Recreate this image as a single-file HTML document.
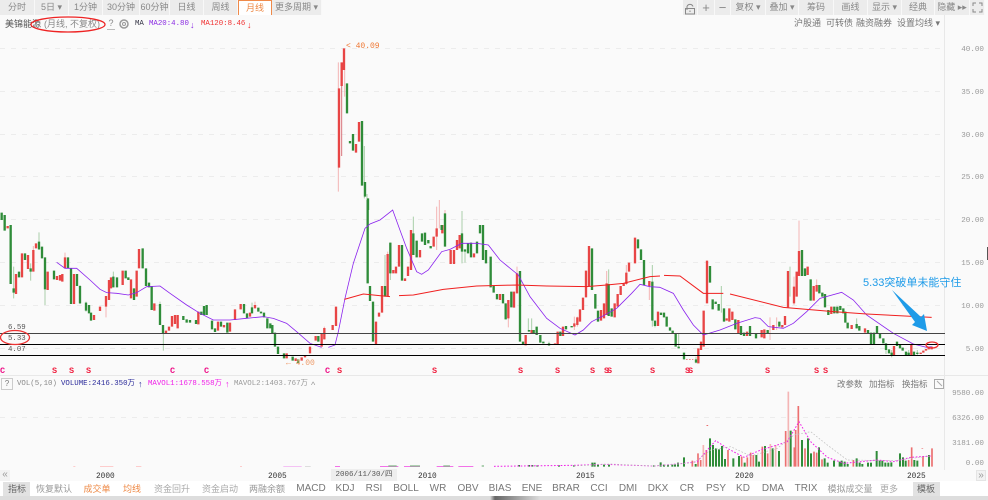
<!DOCTYPE html>
<html><head><meta charset="utf-8"><style>
html,body{margin:0;padding:0;width:988px;height:500px;overflow:hidden;background:#fafafa}
body{position:relative;font-family:"Liberation Sans","Noto Sans CJK SC",sans-serif;font-size:9px;color:#777;filter:blur(.3px)}
.a{position:absolute;white-space:nowrap;line-height:12px}
.t{position:absolute;top:0;height:15px;line-height:15px;background:#ececec;text-align:center;color:#888;font-size:9px;box-sizing:border-box;border-right:1px solid #f8f8f8}
.m{font-family:"Liberation Mono",monospace;font-size:7.4px}
.y{position:absolute;right:4px;font-family:"Liberation Mono",monospace;font-size:7.6px;color:#999;line-height:10px}
.b{position:absolute;top:483px;height:12px;line-height:12px;transform:translateX(-50%);white-space:nowrap;font-size:9px;color:#888}
.e{font-size:10px;color:#777}
</style></head><body>
<div class="t" style="left:0;width:35px">分时</div>
<div class="t" style="left:35px;width:34px">5日 ▾</div>
<div class="t" style="left:69px;width:34px">1分钟</div>
<div class="t" style="left:103px;width:37px">30分钟</div>
<div class="t" style="left:140px;width:30px">60分钟</div>
<div class="t" style="left:170px;width:34px">日线</div>
<div class="t" style="left:204px;width:34px">周线</div>
<div class="t" style="left:238px;width:34px;background:#fff;border:1px solid #ef8a4a;border-bottom:0;color:#ee8844;line-height:14px">月线</div>
<div class="t" style="left:272px;width:50px">更多周期 ▾</div>

<div class="t" style="left:683px;width:15px"></div>
<div class="t" style="left:698px;width:17px;font-size:13px">+</div>
<div class="t" style="left:715px;width:16px;font-size:13px">−</div>
<div class="t" style="left:731px;width:35px">复权 ▾</div>
<div class="t" style="left:766px;width:33px">叠加 ▾</div>
<div class="t" style="left:799px;width:35px">筹码</div>
<div class="t" style="left:834px;width:34px">画线</div>
<div class="t" style="left:868px;width:34px">显示 ▾</div>
<div class="t" style="left:902px;width:33px">经典</div>
<div class="t" style="left:935px;width:35px">隐藏 ▸▸</div>
<div class="t" style="left:970px;width:15px"></div>

<span class="a" style="left:5px;top:18px;color:#555">美锦能源</span>
<span class="a" style="left:44px;top:18px;color:#888">(月线, 不复权)</span>
<span class="a" style="left:107px;top:18px;color:#888;border-bottom:1px solid #bbb;width:8px;text-align:center;line-height:11px">?</span>
<span class="a m" style="left:135px;top:18px;color:#334">MA</span>
<span class="a m" style="left:149px;top:18px;color:#8a2be2">MA20:4.80</span>
<span class="a" style="left:190px;top:19px;color:#8a2be2">↓</span>
<span class="a m" style="left:201px;top:18px;color:#f03030">MA120:8.46</span>
<span class="a" style="left:247px;top:19px;color:#f03030">↓</span>
<span class="a" style="left:794px;top:17px;color:#777">沪股通</span>
<span class="a" style="left:826px;top:17px;color:#777">可转债</span>
<span class="a" style="left:856px;top:17px;color:#777">融资融券</span>
<span class="a" style="left:897px;top:17px;color:#777">设置均线 ▾</span>

<span class="y" style="top:45px">40.00</span>
<span class="y" style="top:88px">35.00</span>
<span class="y" style="top:131px">30.00</span>
<span class="y" style="top:173px">25.00</span>
<span class="y" style="top:216px">20.00</span>
<span class="y" style="top:259px">15.00</span>
<span class="y" style="top:302px">10.00</span>
<span class="y" style="top:345px">5.00</span>
<span class="y" style="top:389px">9580.00</span>
<span class="y" style="top:414px">6326.00</span>
<span class="y" style="top:439px">3181.00</span>
<span class="y" style="top:459px">0.00</span>

<svg width="988" height="500" style="position:absolute;left:0;top:0">
<path d="M944.500 15V470M0 375.500H944M944 375.500H988" stroke="#e8e8e8" fill="none"/>
<path d="M0 48.500H944M0 91.500H944M0 134.500H944M0 176.500H944M0 219.500H944M0 262.500H944M0 305.500H944M0 348.500H944M0 417.500H944" stroke="#ececec" stroke-dasharray="5 6" fill="none"/>
<path d="M687 10V6.500a3.200 3.200 0 0 1 6 0M685.500 8.500h9v5.500h-9z M690 10.500v1.500" stroke="#888" fill="none"/>
<circle cx="124" cy="24" r="4" fill="none" stroke="#999" stroke-width="1.500"/><circle cx="124" cy="24" r="1.500" fill="none" stroke="#999"/>
<path d="M973 6V3h3M982 6V3h-3M973 9v3h3M982 9v3h-3" stroke="#888" fill="none"/>

<!-- candles group 1 -->
<g transform="translate(0,200) scale(.33333)" fill="none">
<path stroke="#a9cfa9" stroke-width="3" d="M41 200V295M92 190V242M117 97V150M135 268V315M240 255V312M258 305V335M490 375V452M480 305V375M340 215V262M612 318V345M756 308V340"/>
<path stroke="#f4b5b5" stroke-width="3" d="M100 138V212M195 158V175M318 320V352M765 305V320M973 380V418"/>
<path stroke="#e84545" stroke-width="7" d="M23 78V85M48 222V282M66 160V232M84 165V207M100 150V215M108 130V145M143 215V270M171 228V240M180 225V242M187 222V245M195 172V205M222 222V312M282 345V360M300 320V333M318 288V320M327 240V300M333 232V265M368 212V255M393 238V295M410 212V290M417 147V205M463 310V332M498 392V400M507 380V392M516 348V380M525 345V372M533 345V385M595 335V373M654 365V392M672 375V382M690 368V395M705 328V360M722 312V328M750 338V350M765 315V325M860 460V475M887 475V483M905 472V482M915 465V472M930 440V460M947 408V422M965 400V440M973 384V418"/>
<path stroke="#2f8c39" stroke-width="7" d="M5 38V60M14 45V92M32 75V252M41 265V278M57 215V232M75 160V180M92 205V215M117 125V148M126 140V175M135 172V268M162 212V238M204 172V205M213 205V312M231 222V258M240 258V310M258 308V332M267 315V340M273 338V362M340 230V262M351 232V262M377 212V235M385 232V240M402 265V300M428 145V205M438 205V258M447 248V262M455 258V330M480 312V375M489 375V400M550 348V360M560 358V368M570 360V368M588 360V372M604 335V345M612 318V345M620 315V345M636 362V388M645 385V396M663 365V380M682 368V398M732 312V340M741 340V355M756 322V340M775 323V335M783 335V340M792 338V352M802 355V385M811 370V385M817 375V400M825 398V440M834 440V462M852 460V475M878 470V482M895 478V490M955 408V425"/>
</g>
<!-- spike -->
<g transform="translate(320,30) scale(.33333)" fill="none">
<path stroke="#f4b5b5" stroke-width="3" d="M55 97V485M74 120V200"/>
<path stroke="#d8767e" stroke-width="3" d="M65 168V378"/>
<path stroke="#a9cfa9" stroke-width="3" d="M133 348V505M141 492V540"/>
<path stroke="#e84545" stroke-width="7" d="M57 175V413M65 97V168M72 55V120M108 342V368M117 276V335"/>
<path stroke="#2f8c39" stroke-width="7" d="M81 160V250M90 333V340M99 312V362M126 273V467M135 456V500M144 505V540"/>
</g>
<!-- group 2 -->
<g transform="translate(330,200) scale(.33333)" fill="none">
<path stroke="#a9cfa9" stroke-width="3" d="M165 165V290M181 128V240M250 50V165M396 33V190M405 155V188M527 310V358M595 355V395M605 355V395M657 425V438M836 208V348M967 195V380M975 362V382"/>
<path stroke="#f4b5b5" stroke-width="3" d="M138 365V433M173 155V290M320 20V150M328 0V85M345 30V100M535 300V382M561 200V280M733 350V390M742 350V380M830 213V345M889 195V255M958 243V300"/>
<path stroke="#e84545" stroke-width="7" d="M8 375V390M18 320V378M138 365V433M147 338V350M156 258V338M173 162V290M190 210V220M198 200V220M207 135V200M225 235V243M234 200V228M243 90V210M270 150V172M311 110V140M320 85V110M337 75V100M362 150V192M372 150V192M381 120V150M389 105V145M432 160V172M510 282V300M535 300V355M552 275V323M561 220V280M587 405V436M605 390V400M675 430V435M683 395V433M699 380V408M733 370V380M742 352V375M750 328V365M759 293V330M768 212V292M777 138V258M813 330V362M822 310V355M830 250V345M854 310V352M863 282V320M872 258V285M881 250V258M889 218V252M897 188V215M915 113V190M958 243V258M984 335V378"/>
<path stroke="#2f8c39" stroke-width="7" d="M113 0V250M120 258V303M129 305V425M165 258V290M181 128V220M216 135V242M250 100V165M260 122V172M276 100V125M285 98V135M295 120V130M302 138V145M335 75V90M345 40V140M396 100V155M405 148V155M414 130V160M423 128V172M441 125V160M450 75V100M459 75V180M468 150V190M482 170V262M491 258V278M501 282V298M519 282V310M527 310V358M544 275V322M570 213V425M579 425V435M597 390V395M611 390V400M620 380V405M631 405V428M640 425V430M657 430V436M691 395V408M708 378V388M725 378V382M786 145V270M796 282V326M804 332V365M836 252V348M845 325V350M924 118V145M933 148V180M942 180V255M967 245V362M975 362V378"/>
</g>
<!-- group 3 -->
<g transform="translate(660,200) scale(.33333)" fill="none">
<path stroke="#a9cfa9" stroke-width="3" d="M56 402V445M108 470V490M184 258V338M243 378V405M390 200V290M452 238V302M556 335V368M590 355V385M678 430V462M695 450V472M746 450V468M772 450V465"/>
<path stroke="#f4b5b5" stroke-width="3" d="M417 62V228M402 230V315M470 238V275M350 352V390M330 352V420M754 430V465"/>
<path stroke="#e84545" stroke-width="7" d="M115 445V490M123 425V450M131 332V440M141 182V310M200 355V362M208 325V365M217 335V360M235 360V400M261 395V408M305 390V412M313 388V415M340 375V390M367 375V382M375 348V375M384 213V322M402 260V310M410 215V290M417 153V228M443 200V225M461 258V302M470 255V275M514 320V342M575 375V387M615 385V398M702 438V465M754 435V465M782 458V462M790 452V458M798 447V452M806 442V448M815 440V448"/>
<path stroke="#2f8c39" stroke-width="7" d="M3 338V345M12 338V352M20 350V380M30 382V392M38 392V402M47 402V440M56 440V445M72 458V478M108 478V488M150 198V248M158 298V328M167 305V312M176 312V332M192 325V365M226 358V388M243 378V405M252 398V408M270 378V408M288 400V415M323 390V400M358 365V380M426 150V228M435 205V228M452 238V302M478 255V280M487 278V290M495 282V322M505 330V345M523 320V340M532 320V340M541 318V330M550 325V340M556 335V368M563 368V385M590 372V385M598 378V392M624 390V400M633 398V432M642 398V432M651 378V400M660 400V415M670 415V430M678 430V450M687 448V460M695 458V468M711 425V438M720 435V445M728 443V452M738 455V465M746 458V465M762 455V468M772 458V462"/>
<path stroke="#e84545" stroke-width="2" stroke-dasharray="5 4" d="M78 478H100"/>
</g>
<!-- MA lines -->
<g fill="none" stroke="#8a22ee">
<path transform="translate(0,200) scale(.33333)" stroke-width="2.400" d="M170 187L195 205L230 205L270 240L300 268L320 278L350 280L385 285L410 278L440 260L480 258L510 280L560 315L600 340L640 360L690 360L740 355L790 350L820 355L860 370L890 395L930 430L965 442"/>
<path transform="translate(330,200) scale(.33333)" stroke-width="2.400" d="M-5 442L15 435L25 395L45 295L70 190L105 85L120 72L150 60L188 30L208 85L230 145L260 215L275 223L295 210L335 155L360 148L395 130L440 130L475 135L510 180L565 225L600 290L650 355L690 385L735 405L760 390L785 365L815 350L860 325L905 280L930 253L960 260L990 262"/>
<path transform="translate(660,200) scale(.33333)" stroke-width="2.400" d="M0 262L40 280L70 330L100 375L130 405L180 390L230 370L285 353L300 355L325 380L370 385L400 370L440 335L480 295L545 277L580 300L620 345L700 400L760 432L800 442L815 440"/>
</g>
<g fill="none" stroke="#f02020" stroke-width="3">
<path transform="translate(330,200) scale(.33333)" d="M43 298L100 282L130 285L180 290M207 287L250 285L340 268L440 258L560 255L650 258L770 260L830 255L880 250L960 230L990 228"/>
<path transform="translate(660,200) scale(.33333)" d="M12 226L60 228L130 280L190 280M210 282L370 322L520 335L620 342L815 352"/>
</g>
<!-- level lines -->
<path d="M0 333.500H945" stroke="#444" stroke-width="1"/>
<path d="M0 344.500H945M0 355.500H945" stroke="#000" stroke-width="1"/>
<ellipse cx="15" cy="337.500" rx="14.500" ry="7" fill="none" stroke="#e33" stroke-width="1.300"/>
<ellipse cx="68" cy="24.500" rx="37" ry="7.500" fill="none" stroke="#e22" stroke-width="1.300"/>
<ellipse cx="932" cy="345" rx="6" ry="3" fill="none" stroke="#e33" stroke-width="1.300"/>
<path d="M892 290L921 317L924 314L927 331L912 325L915 322Z" fill="#1e9be8"/>

<!-- volume -->
<g transform="translate(494,370) scale(.33333)" fill="none">
<path stroke="#f4b5b5" stroke-width="5" d="M628 225V290M829 222V290M845 225V290M883 65V290"/>
<path stroke="#ec7070" stroke-width="5" d="M595 272V290M612 250V290M620 270V290M637 240V290M702 240V290M743 260V290M760 262V290M770 248V290M778 255V290M805 230V290M821 250V290M875 183V290M901 232V290M905 180V290M913 108V290M933 235V290M960 245V290M968 248V290M984 268V290M1078 270V290M1244 270V290M1253 232V290M1287 258V290M1314 235V290M640 165V168M1285 235V237"/>
<path stroke="#2f8c39" stroke-width="6" d="M75 285V290M105 285V290M115 285V290M130 286V290M195 286V290M240 286V290M295 278V290M302 278V290M312 284V290M330 284V290M345 284V290M480 286V290M500 277V290M510 284V290M522 284V290M535 284V290M543 283V290M552 278V290M570 262V290M605 282V290M648 205V290M657 225V290M666 235V290M675 238V290M684 228V290M693 267V290M718 265V290M735 258V290M752 278V290M787 255V290M795 275V290M813 228V290M836 235V290M855 243V290M890 182V290M924 210V290M942 205V290M951 250V290M975 232V290M992 265V290M1001 278V290M1020 272V290M1037 275V290M1043 272V290M1052 275V290M1061 282V290M1088 265V290M1097 278V290M1105 282V290M1122 278V290M1131 278V290M1148 243V290M1157 272V290M1165 272V290M1174 278V290M1183 278V290M1192 277V290M1218 250V290M1227 262V290M1235 272V290M1261 270V290M1270 272V290M1305 255V290"/>
<path stroke="#f020e8" stroke-width="3" stroke-dasharray="5 5" d="M0 289L240 286L330 283L480 288L570 280L610 275L640 240L665 212L700 235L750 262L800 240L850 225L880 215L915 155L950 215L1000 262L1050 280L1150 270L1200 275L1250 262L1310 258"/>
<path stroke="#bbb" stroke-width="2" stroke-dasharray="5 5" d="M240 288L350 282L480 288L600 278L650 240L710 230L770 258L850 235L900 195L950 185L1000 225L1060 270L1200 272L1310 258"/>
</g>
<g transform="translate(0,370) scale(.33333)" fill="none">
<path stroke="#ffb0b0" stroke-width="2" d="M220 289H226M300 289H340M408 289H424M720 289H726"/>
<path stroke="#f0a0f0" stroke-width="2" d="M850 289H905"/>
<path stroke="#cfcfcf" stroke-width="2" d="M915 289H932"/>
<path stroke="#ee22dd" stroke-width="2" d="M1005 289H1020M1140 289H1195M1212 289H1260M1310 289H1360M1375 289H1420"/>
<path stroke="#2f8c39" stroke-width="2" d="M1165 288H1190M1230 288H1260M1330 288H1350M1445 288H1452"/>
</g>
<path d="M0 481.500H988" stroke="#f0f0f0"/>
<path d="M934.500 379.500h9v9h-9zM937 381l5 5" stroke="#aaa" fill="none"/>
</svg>

<span class="a" style="left:8px;top:322px;color:#555;font-family:'Liberation Mono',monospace;font-size:7.4px">6.59</span>
<span class="a" style="left:8px;top:333px;color:#555;font-family:'Liberation Mono',monospace;font-size:7.4px">5.33</span>
<span class="a" style="left:8px;top:344px;color:#555;font-family:'Liberation Mono',monospace;font-size:7.4px">4.07</span>
<span class="a m" style="left:346px;top:41px;color:#ee7733;font-size:8px">&lt; 40.09</span>
<span class="a m" style="left:286px;top:358px;color:#ee9966;font-size:8px">← 4.00</span>
<span class="a" style="left:863px;top:276px;color:#1e9be8;font-size:11px;line-height:14px">5.33突破单未能守住</span>

<div style="position:absolute;left:0;top:0;width:988px;height:0;font:bold 8.5px 'Liberation Mono',monospace;color:#f02040">
<span class="a" style="left:0;top:365px;color:#ee1188">C</span><span class="a" style="left:52px;top:365px">S</span><span class="a" style="left:69px;top:365px">S</span><span class="a" style="left:86px;top:365px">S</span><span class="a" style="left:170px;top:365px;color:#ee1188">C</span><span class="a" style="left:204px;top:365px;color:#ee1188">C</span><span class="a" style="left:325px;top:365px;color:#ee1188">C</span><span class="a" style="left:337px;top:365px">S</span><span class="a" style="left:432px;top:365px">S</span><span class="a" style="left:518px;top:365px">S</span><span class="a" style="left:555px;top:365px">S</span><span class="a" style="left:590px;top:365px">S</span><span class="a" style="left:604px;top:365px">S</span><span class="a" style="left:607px;top:365px">S</span><span class="a" style="left:650px;top:365px">S</span><span class="a" style="left:685px;top:365px">S</span><span class="a" style="left:688px;top:365px">S</span><span class="a" style="left:765px;top:365px">S</span><span class="a" style="left:814px;top:365px">S</span><span class="a" style="left:823px;top:365px">S</span>
</div>

<span class="a" style="left:1px;top:378px;width:10px;height:10px;border:1px solid #ccc;text-align:center;line-height:10px;font-size:8px;color:#777">?</span>
<span class="a m" style="left:17px;top:378px;color:#888">VOL(5,10)</span>
<span class="a m" style="left:61px;top:378px;color:#2a2a9a">VOLUME:2416.350万</span>
<span class="a" style="left:138px;top:378px;color:#2a2a9a">↑</span>
<span class="a m" style="left:148px;top:378px;color:#f020e8">MAVOL1:1678.558万</span>
<span class="a" style="left:225px;top:378px;color:#f020e8">↑</span>
<span class="a m" style="left:234px;top:378px;color:#999">MAVOL2:1403.767万</span>
<span class="a" style="left:311px;top:379px;color:#999">^</span>
<span class="a" style="left:837px;top:378px;font-size:8.500px">改参数</span>
<span class="a" style="left:869px;top:378px;font-size:8.500px">加指标</span>
<span class="a" style="left:902px;top:378px;font-size:8.500px">换指标</span>

<span class="a" style="left:0;top:470px;width:10px;height:11px;background:#f2f2f2;color:#999;text-align:center;line-height:10px;font-size:10px">«</span>
<span class="a" style="left:976px;top:470px;width:10px;height:11px;background:#f2f2f2;color:#999;text-align:center;line-height:10px;font-size:10px;border:1px solid #e4e4e4;box-sizing:border-box">»</span>
<span class="a m" style="left:96px;top:471px;color:#333;font-size:7.800px">2000</span>
<span class="a m" style="left:268px;top:471px;color:#333;font-size:7.800px">2005</span>
<span class="a m" style="left:331px;top:469px;width:66px;height:12px;background:#eee;color:#555;text-align:center;font-size:7.500px">2006/11/30/四</span>
<span class="a m" style="left:418px;top:471px;color:#333;font-size:7.800px">2010</span>
<span class="a m" style="left:576px;top:471px;color:#333;font-size:7.800px">2015</span>
<span class="a m" style="left:735px;top:471px;color:#333;font-size:7.800px">2020</span>
<span class="a m" style="left:907px;top:471px;color:#333;font-size:7.800px">2025</span>

<div style="position:absolute;left:0;top:481px;width:988px;height:15px;background:#fff"></div>
<div style="position:absolute;left:3px;top:482px;width:27px;height:14px;background:#e2e2e2"></div>
<div style="position:absolute;left:913px;top:482px;width:27px;height:14px;background:#e2e2e2"></div>
<div style="position:absolute;left:0;top:496px;width:988px;height:4px;background:linear-gradient(90deg,#ddd 0,#ddd 490px,#666 495px,#ddd 540px,#ddd 100%)"></div>
<div style="position:absolute;left:987px;top:247px;width:1px;height:13px;background:#555"></div>

<span class="b" style="left:17px;color:#666">指标</span>
<span class="b" style="left:54px;color:#999">恢复默认</span>
<span class="b" style="left:97px;color:#ee8844">成交单</span>
<span class="b" style="left:132px;color:#ee8844">均线</span>
<span class="b" style="left:172px;color:#aaa">资金回升</span>
<span class="b" style="left:220px;color:#aaa">资金启动</span>
<span class="b" style="left:267px;color:#999">两融余额</span>
<span class="b e" style="left:311px">MACD</span>
<span class="b e" style="left:345px">KDJ</span>
<span class="b e" style="left:374px">RSI</span>
<span class="b e" style="left:406px">BOLL</span>
<span class="b e" style="left:438px">WR</span>
<span class="b e" style="left:468px">OBV</span>
<span class="b e" style="left:500px">BIAS</span>
<span class="b e" style="left:532px">ENE</span>
<span class="b e" style="left:566px">BRAR</span>
<span class="b e" style="left:599px">CCI</span>
<span class="b e" style="left:628px">DMI</span>
<span class="b e" style="left:658px">DKX</span>
<span class="b e" style="left:687px">CR</span>
<span class="b e" style="left:716px">PSY</span>
<span class="b e" style="left:743px">KD</span>
<span class="b e" style="left:773px">DMA</span>
<span class="b e" style="left:806px">TRIX</span>
<span class="b" style="left:850px;color:#999">模拟成交量</span>
<span class="b" style="left:889px;color:#aaa">更多</span>
<span class="b" style="left:926px;color:#666">模板</span>
</body></html>
